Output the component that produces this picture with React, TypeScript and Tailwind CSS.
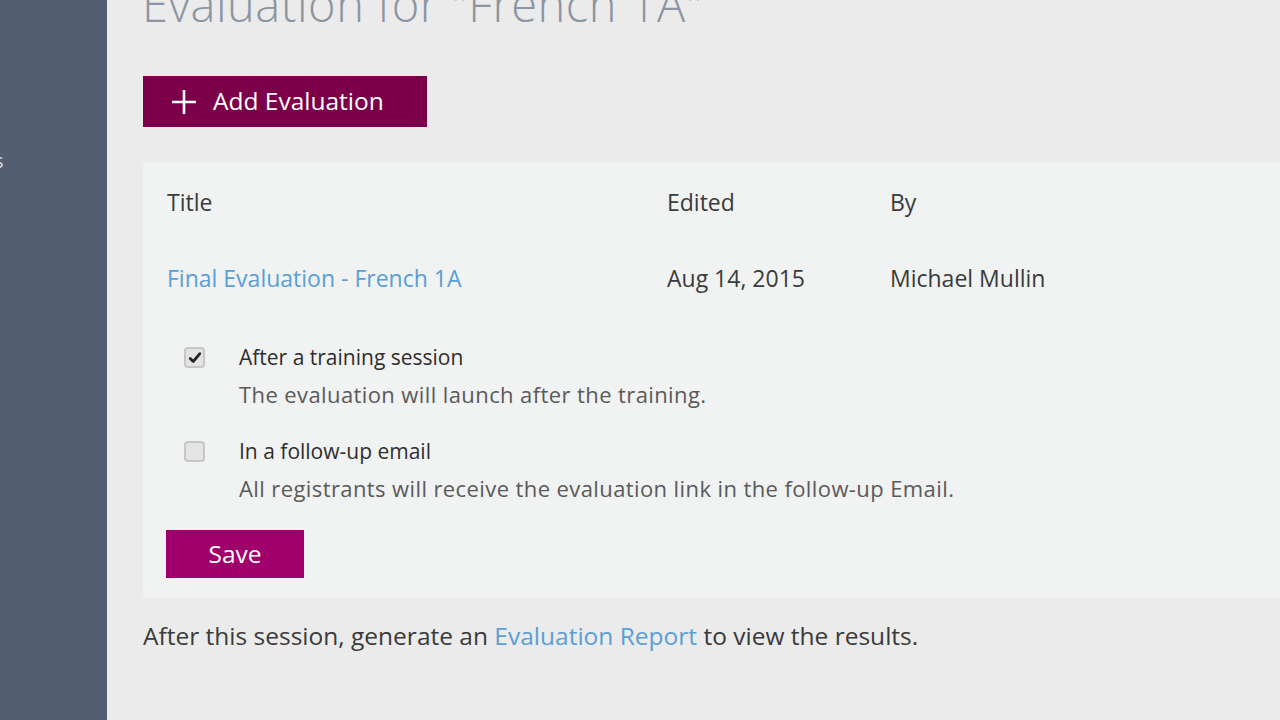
import React, { useState } from 'react';

const font = { fontFamily: '"Open Sans", "Noto Sans", sans-serif' };

const Check: React.FC<{ checked: boolean; onToggle: () => void }> = ({ checked, onToggle }) => (
  <button
    onClick={onToggle}
    className="w-[21px] h-[21px] rounded-[4px] border-2 border-[#c6c6c6] bg-[#e4e4e4] flex items-center justify-center shrink-0"
  >
    {checked && (
      <svg viewBox="0 0 16 16" className="w-[14px] h-[14px]">
        <path d="M2.5 8.5 L6 12 L13.5 3" fill="none" stroke="#262626" strokeWidth="3.2" strokeLinecap="round" strokeLinejoin="round" />
      </svg>
    )}
  </button>
);

const App: React.FC = () => {
  const [afterTraining, setAfterTraining] = useState(true);
  const [followUp, setFollowUp] = useState(false);

  return (
    <div className="w-[1280px] h-[720px] overflow-hidden flex bg-[#ebebeb]" style={font}>
      <aside className="w-[107px] shrink-0 bg-[#535f70] relative">
        <span className="absolute left-[-6px] top-[146px] text-[20px] text-[#d8dce2]">s</span>
      </aside>

      <main className="flex-1 pl-[36px] flex flex-col">
        <h1 className="text-[47px] font-light leading-none text-[#8c95a2] mt-[-19px] ml-[-1px] tracking-[0.5px] whitespace-nowrap">
          Evaluation for "French 1A"
        </h1>

        <button className="mt-[48px] w-[284px] h-[51px] bg-[#7b0049] text-white flex items-center gap-[16px] pl-[28px] text-[24.5px] shrink-0">
          <svg viewBox="0 0 24 24" className="w-[26px] h-[26px]">
            <path d="M12 1 V23 M1 12 H23" stroke="white" strokeWidth="2.4" fill="none" />
          </svg>
          Add Evaluation
        </button>

        <section className="mt-[36px] bg-[#f1f2f2] pl-[24px] pt-[22px] h-[435px] shrink-0">
          <div className="grid grid-cols-[500px_223px_1fr] text-[23px] text-[#3b3b3b] h-[32px] items-center">
            <span>Title</span>
            <span>Edited</span>
            <span>By</span>
          </div>
          <div className="grid grid-cols-[500px_223px_1fr] text-[23px] text-[#3b3b3b] h-[32px] items-center mt-[44px]">
            <a className="text-[#5a9fd6]">Final Evaluation - French 1A</a>
            <span>Aug 14, 2015</span>
            <span>Michael Mullin</span>
          </div>

          <div className="mt-[49px] ml-[17px] flex flex-col gap-[27px]">
            <div className="flex gap-[34px]">
              <div className="pt-[5px]">
                <Check checked={afterTraining} onToggle={() => setAfterTraining(!afterTraining)} />
              </div>
              <div className="flex flex-col gap-[7px]">
                <span className="text-[21px] text-[#2e2e2e] leading-[30px]">After a training session</span>
                <span className="text-[22px] text-[#5a5a5a] leading-[30px] tracking-[0.4px]">The evaluation will launch after the training.</span>
              </div>
            </div>
            <div className="flex gap-[34px]">
              <div className="pt-[5px]">
                <Check checked={followUp} onToggle={() => setFollowUp(!followUp)} />
              </div>
              <div className="flex flex-col gap-[7px]">
                <span className="text-[21px] text-[#2e2e2e] leading-[30px]">In a follow-up email</span>
                <span className="text-[22px] text-[#5a5a5a] leading-[30px] tracking-[0.4px]">All registrants will receive the evaluation link in the follow-up Email.</span>
              </div>
            </div>
          </div>

          <button className="mt-[27px] ml-[-1px] w-[138px] h-[48px] bg-[#a0006b] text-white text-[24.5px] leading-none">Save</button>
        </section>

        <p className="mt-[23px] text-[24.5px] leading-[30px] text-[#3a3a3a]">
          After this session, generate an <a className="text-[#5a9fd6]">Evaluation Report</a> to view the results.
        </p>
      </main>
    </div>
  );
};

export default App;
